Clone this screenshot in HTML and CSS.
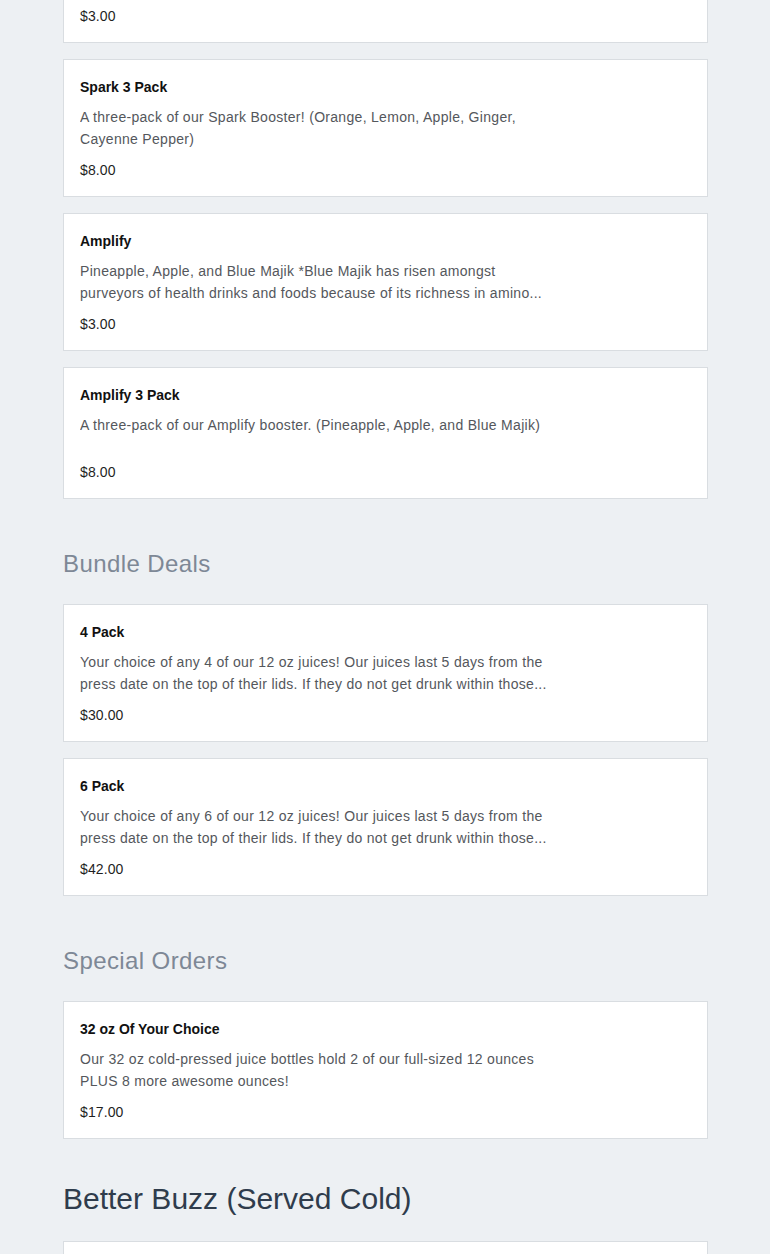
FILE: index.html
```html
<!DOCTYPE html>
<html>
<head>
<meta charset="utf-8">
<link rel="stylesheet" href="styles.css">
</head>
<body>
<main class="menu">
  <section class="group">
    <div class="items">
      <article class="item">
        <h3 class="item-title">Spark</h3>
        <p class="item-desc">Orange, Lemon, Apple, Ginger, and Cayenne Pepper. A zesty little shot to wake you up.</p>
        <div class="item-price">$3.00</div>
      </article>
      <article class="item">
        <h3 class="item-title">Spark 3 Pack</h3>
        <p class="item-desc">A three-pack of our Spark Booster! (Orange, Lemon, Apple, Ginger, Cayenne Pepper)</p>
        <div class="item-price">$8.00</div>
      </article>
      <article class="item">
        <h3 class="item-title">Amplify</h3>
        <p class="item-desc">Pineapple, Apple, and Blue Majik *Blue Majik has risen amongst purveyors of health drinks and foods because of its richness in amino...</p>
        <div class="item-price">$3.00</div>
      </article>
      <article class="item">
        <h3 class="item-title">Amplify 3 Pack</h3>
        <p class="item-desc">A three-pack of our Amplify booster. (Pineapple, Apple, and Blue Majik)</p>
        <div class="item-price">$8.00</div>
      </article>
    </div>
  </section>

  <section class="group">
    <h2 class="group-title muted">Bundle Deals</h2>
    <div class="items">
      <article class="item">
        <h3 class="item-title">4 Pack</h3>
        <p class="item-desc">Your choice of any 4 of our 12 oz juices! Our juices last 5 days from the press date on the top of their lids. If they do not get drunk within those...</p>
        <div class="item-price">$30.00</div>
      </article>
      <article class="item">
        <h3 class="item-title">6 Pack</h3>
        <p class="item-desc">Your choice of any 6 of our 12 oz juices! Our juices last 5 days from the press date on the top of their lids. If they do not get drunk within those...</p>
        <div class="item-price">$42.00</div>
      </article>
    </div>
  </section>

  <section class="group">
    <h2 class="group-title muted">Special Orders</h2>
    <div class="items">
      <article class="item">
        <h3 class="item-title">32 oz Of Your Choice</h3>
        <p class="item-desc">Our 32 oz cold-pressed juice bottles hold 2 of our full-sized 12 ounces PLUS 8 more awesome ounces!</p>
        <div class="item-price">$17.00</div>
      </article>
    </div>
  </section>

  <section class="group">
    <h2 class="group-title large">Better Buzz (Served Cold)</h2>
    <div class="items">
      <article class="item">
        <h3 class="item-title">Cold Brew</h3>
        <p class="item-desc">Smooth, slow-steeped cold brew coffee.</p>
        <div class="item-price">$4.00</div>
      </article>
    </div>
  </section>
</main>
</body>
</html>
```

FILE: styles.css
```css
* { box-sizing: border-box; }
html, body { margin: 0; padding: 0; }
body {
  background: #edf0f3;
  font-family: "Liberation Sans", Arial, sans-serif;
  color: #1f1f1f;
  overflow: hidden;
  height: 1254px;
}
.menu {
  width: 645px;
  margin: -95px 0 0 63px;
}
.items {
  display: flex;
  flex-direction: column;
  gap: 16px;
}
.item {
  background: #ffffff;
  border: 1px solid #d9dde1;
  padding: 16px;
}
.item-title {
  margin: 0;
  font-size: 14px;
  line-height: 22px;
  font-weight: 700;
  color: #111;
}
.item-desc {
  margin: 8px 0 0;
  max-width: 474px;
  min-height: 38px;
  font-size: 14px;
  line-height: 22px;
  letter-spacing: 0.3px;
  color: #54575c;
  display: -webkit-box;
  -webkit-line-clamp: 2;
  -webkit-box-orient: vertical;
  overflow: hidden;
}
.item-price {
  margin-top: 10px;
  font-size: 14px;
  line-height: 20px;
  letter-spacing: 0.1px;
  color: #1f1f1f;
}
.group-title {
  margin: 0;
  font-weight: 400;
}
.group-title.muted {
  margin: 49px 0 24px;
  font-size: 24px;
  line-height: 32px;
  letter-spacing: 0.4px;
  color: #7e8896;
}
.group-title.large {
  margin: 38px 0 20px;
  font-size: 30px;
  line-height: 44px;
  color: #2f3c4c;
}
```
